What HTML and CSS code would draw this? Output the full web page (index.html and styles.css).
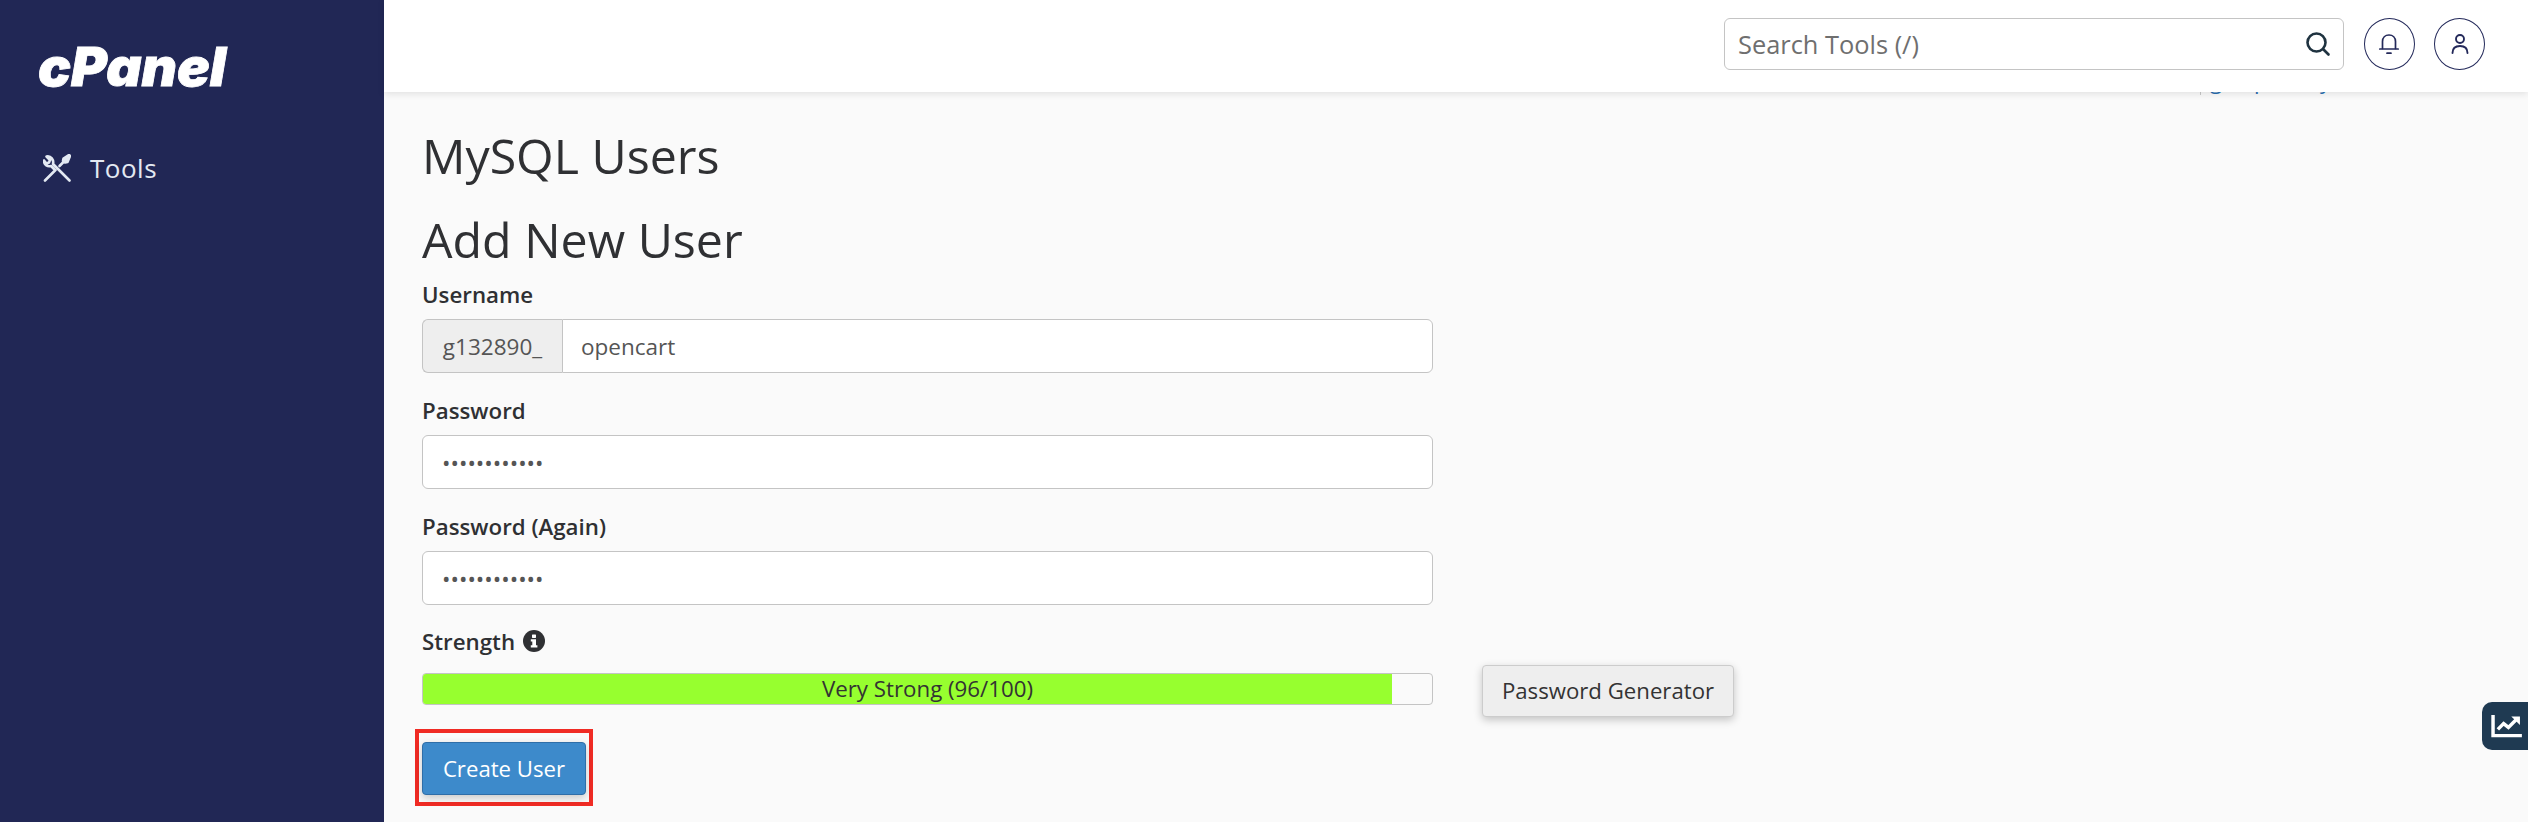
FILE: index.html
```html
<!DOCTYPE html>
<html lang="en">
<head>
<meta charset="utf-8">
<title>MySQL Users</title>
<link rel="stylesheet" href="styles.css">
</head>
<body>
<div class="app">
  <aside class="sidebar">
    <svg class="logo" viewBox="0 0 192 42" role="img" aria-label="cPanel">
      <text class="logo-text" x="1" y="40" textLength="188" lengthAdjust="spacingAndGlyphs">cPanel</text>
    </svg>
    <a class="nav-item" href="#">
      <svg class="nav-icon" viewBox="0 0 28 28" fill="none" stroke="#e3e9f2" stroke-width="2.600" stroke-linecap="round" stroke-linejoin="round">
        <path d="M2 26.500 12.500 16"/>
        <path d="M16.500 12 21.500 7"/>
        <path d="M20.500 4.500 26 1 27 2 24.500 8 22 8.500 20 7Z" fill="#e3e9f2"/>
        <path d="M26.500 26.500 10 10C11 6 8 1.500 3.500 2.500L7 6 6 8.500 3.500 9.500 1 6.500C.7 10.500 4.500 13 8 12L11 15"/>
      </svg>
      <span>Tools</span>
    </a>
  </aside>
  <div class="main">
    <header class="topbar">
      <div class="search">
        <span class="search-text">Search Tools (/)</span>
        <svg class="search-icon" viewBox="0 0 26 26" fill="none" stroke="#1f3340" stroke-width="2.600" stroke-linecap="round">
          <circle cx="11.500" cy="11.500" r="9"/>
          <path d="M18.500 18.500 23.500 23.500"/>
        </svg>
      </div>
      <button class="round-btn" type="button" aria-label="Notifications">
        <svg viewBox="0 0 24 24" fill="none" stroke="#23295a" stroke-width="1.700" stroke-linecap="round" stroke-linejoin="round">
          <path d="M5.500 16.500V9.500C5.500 5.500 8.200 3 12 3s6.500 2.500 6.500 6.500v7"/>
          <path d="M2.800 17h18.400"/>
          <path d="M10 21.200h4"/>
        </svg>
      </button>
      <button class="round-btn" type="button" aria-label="Account">
        <svg viewBox="0 0 24 24" fill="none" stroke="#23295a" stroke-width="1.900" stroke-linecap="round">
          <circle cx="12" cy="7" r="4"/>
          <path d="M4.500 21c0-4.500 3-7 7.500-7s7.500 2.500 7.500 7"/>
        </svg>
      </button>
    </header>
    <div class="peek-links">
      <span class="peek-pipe"></span>
      <span class="peek-a">g</span>
      <span class="peek-b">p</span>
      <span class="peek-c">y</span>
      <span class="peek-d">(</span>
    </div>
    <main class="content">
      <h1>MySQL Users</h1>
      <h2>Add New User</h2>
      <form class="user-form">
        <div class="field">
          <label for="u">Username</label>
          <div class="input-group">
            <span class="addon">g132890_</span>
            <input id="u" class="control joined" type="text" value="opencart">
          </div>
        </div>
        <div class="field">
          <label for="p1">Password</label>
          <input id="p1" class="control" type="password" value="abcdefghijkl">
        </div>
        <div class="field">
          <label for="p2">Password (Again)</label>
          <input id="p2" class="control" type="password" value="abcdefghijkl">
        </div>
        <div class="field strength-field">
          <span class="label-line">Strength
            <svg class="info" viewBox="0 0 22 22">
              <circle cx="11" cy="11" r="11" fill="#2f3033"/>
              <rect x="9" y="4.500" width="4" height="3.400" rx=".6" fill="#fff"/>
              <path d="M7.800 9.300h5.200v6h1.400v2.300H7.800v-2.300h1.500v-3.700H7.800z" fill="#fff"/>
            </svg>
          </span>
          <div class="strength-row">
            <div class="meter">
              <div class="meter-fill" style="width:96%"></div>
              <span class="meter-text">Very Strong (96/100)</span>
            </div>
            <button class="gen-btn" type="button">Password Generator</button>
          </div>
        </div>
        <div class="submit-wrap">
          <button class="create-btn" type="button">Create User</button>
        </div>
      </form>
    </main>
    <div class="side-tab">
      <svg viewBox="0 0 32 26" fill="none" stroke="#fff" stroke-width="3.600">
        <path d="M2 1v21.500h30"/>
        <path d="M7 16l6-6 5 4 9-9"/>
        <path d="M21 2.500h9v9z" fill="#fff" stroke="none"/>
      </svg>
    </div>
  </div>
</div>
</body>
</html>
```
FILE: styles.css
```css
* { box-sizing: border-box; }
html, body { margin: 0; height: 100%; overflow: hidden; }
body { font-family: "Open Sans", "Noto Sans", sans-serif; color: #2f3033; background: #fafafa; }
.app { display: flex; width: 2528px; height: 822px; overflow: hidden; }

.sidebar { width: 384px; flex: none; background: #212755; padding: 46px 0 0 37px; }
.logo { display: block; width: 192px; height: 42px; overflow: visible; }
.logo-text { font-family: "Inter", "Liberation Sans", sans-serif; font-style: italic; font-weight: 900; font-size: 53px; fill: #fff; stroke: #fff; stroke-width: .8px; }
.nav-item { display: flex; align-items: center; gap: 19px; margin: 65px 0 0 6px; color: #e3e9f2; text-decoration: none; font-size: 26px; line-height: 30px; letter-spacing: .5px; }
.nav-icon { width: 28px; height: 28px; flex: none; }

.main { position: relative; flex: 1; min-width: 0; }
.topbar { position: relative; z-index: 2; height: 92px; background: #fff; box-shadow: 0 2px 7px rgba(0,0,0,.1); display: flex; align-items: center; justify-content: flex-end; padding: 0 43px 4px 0; gap: 19.500px; }
.search { width: 620px; height: 52px; border: 1px solid #c4c4c4; border-radius: 6px; display: flex; align-items: center; justify-content: space-between; padding: 0 12px 0 13px; background: #fff; }
.search-text { font-size: 25.400px; color: #6f6f6f; }
.search-icon { width: 26px; height: 26px; }
.round-btn { width: 51px; height: 52px; border: 1.500px solid #23295a; border-radius: 50%; background: #fff; padding: 0; display: flex; align-items: center; justify-content: center; }
.round-btn svg { width: 24px; height: 24px; }

.peek-links { position: absolute; z-index: 1; top: 65px; left: 1816px; width: 170px; height: 34px; color: #2a6fb0; font-size: 22px; line-height: 30px; }
.peek-links span { position: absolute; top: 0; }
.peek-pipe { left: 0; width: 1px; height: 30px; background: #c8c8c8; }
.peek-a { left: 10px; }
.peek-b { left: 54px; }
.peek-c { left: 120px; }
.peek-d { left: 156px; }

.content { padding: 0 0 0 38px; }
h1, h2 { margin: 0; font-weight: 500; font-size: 48.300px; line-height: 68px; color: #2f3033; }
h1 { padding-top: 29px; }
h2 { margin-top: 16px; }
.user-form { width: 1011px; padding-top: 6px; }
.field label, .label-line { display: block; font-weight: 600; font-size: 22.300px; line-height: 32px; margin-bottom: 8px; color: #2f3033; }
.control { display: block; width: 100%; height: 54px; border: 1px solid #c4c4c4; border-radius: 6px; background: #fff; padding: 0 19px; font: 400 22.500px "Open Sans", sans-serif; color: #555; outline: none; }
.field + .field { margin-top: 22px; }
.input-group { display: flex; }
.addon { width: 140px; height: 54px; flex: none; display: flex; align-items: center; justify-content: center; background: #eee; border: 1px solid #c4c4c4; border-right: 0; border-radius: 6px 0 0 6px; font-size: 22.500px; color: #555; }
.joined { flex: 1; padding-left: 18px; border-radius: 0 6px 6px 0; }
.info { width: 22px; height: 22px; vertical-align: -2px; margin-left: 2px; }

.field.strength-field { margin-top: 21px; }
.strength-row { position: relative; }
.meter { position: relative; height: 32px; border: 1px solid #c4c4c4; border-radius: 4px; background: #fafafa; overflow: hidden; margin-top: 15px; }
.meter-fill { height: 100%; background: #97ff2f; }
.meter-text { position: absolute; inset: 0; display: flex; align-items: center; justify-content: center; font-size: 22.300px; color: #333; padding-bottom: 2px; }
.gen-btn { position: absolute; left: 1060px; top: -8px; width: 252px; height: 52px; border: 1px solid #ccc; border-radius: 4px; background: #eee; font: 400 22.200px "Open Sans", sans-serif; color: #333; box-shadow: 0 3px 8px rgba(0,0,0,.22); padding: 0 0 2px; }

.submit-wrap { margin-top: 24px; width: 178px; height: 77px; margin-left: -7px; border: 4px solid #f02b24; padding: 9px 3px; }
.create-btn { display: block; width: 164px; height: 53px; border: 1px solid #2f6ea8; border-radius: 4px; background: #3d8acb; color: #fff; font: 400 22.200px "Open Sans", sans-serif; box-shadow: 0 3px 8px rgba(0,0,0,.2); padding: 0; }

.side-tab { position: absolute; right: 0; top: 702px; width: 46px; height: 48px; background: #1f3a52; border-radius: 10px 0 0 10px; display: flex; align-items: center; padding-left: 8px; overflow: hidden; }
.side-tab svg { width: 33px; height: 25px; flex: none; }
```
